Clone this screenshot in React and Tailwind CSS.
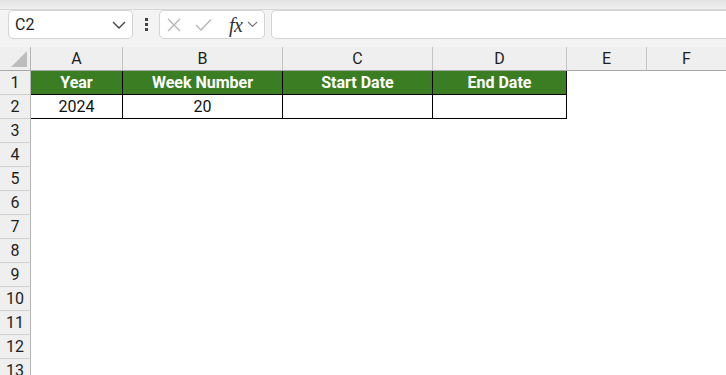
import { ChevronDown } from "lucide-react";

const cols = [
    { key: "A", w: "w-[92px]" },
    { key: "B", w: "w-[160px]" },
    { key: "C", w: "w-[150px]" },
    { key: "D", w: "w-[134px]" },
    { key: "E", w: "w-[80px]" },
    { key: "F", w: "w-[80px]" },
];

const header = ["Year", "Week Number", "Start Date", "End Date"];
const values = ["2024", "20", "", ""];

const RowHead = ({ n }) => (
    <div className="w-[31px] h-[24px] shrink-0 bg-[#efefef] border-r border-b border-r-[#b4b4b4] border-b-[#cfcfcf] flex items-center justify-center text-[16px] text-[#1e1e1e]">
        {n}
    </div>
);

export default function App() {
    const rows = Array.from({ length: 11 }, (_, i) => i + 3);

    return (
        <div className="w-[726px] h-[375px] overflow-hidden bg-[#f3f3f3] font-['Roboto',sans-serif] select-none">

            {/* ribbon edge */}
            <div className="h-[10px] bg-gradient-to-b from-[#e3e3e3] to-[#efefef] border-b border-[#d6d6d6]" />

            {/* formula bar */}
            <div className="flex items-stretch h-[29px] pl-[8px]">
                <div className="w-[125px] bg-white border border-[#d4d4d4] rounded-[5px] flex items-center justify-between pl-[6px] pr-[6px]">
                    <span className="text-[16px] text-[#1e1e1e]">C2</span>
                    <svg width="14" height="8" viewBox="0 0 14 8">
                        <path d="M1 1 L7 7 L13 1" stroke="#444" strokeWidth="1.4" fill="none" />
                    </svg>
                </div>
                <div className="w-[26px] flex flex-col items-center justify-center gap-[2px]">
                    <span className="w-[3px] h-[3px] bg-[#444]" />
                    <span className="w-[3px] h-[3px] bg-[#444]" />
                    <span className="w-[3px] h-[3px] bg-[#444]" />
                </div>
                <div className="w-[106px] bg-white border border-[#d4d4d4] rounded-[5px] flex items-center pl-[7px]">
                    <svg width="14" height="14" viewBox="0 0 14 14" className="shrink-0">
                        <path d="M1 1 L13 13 M13 1 L1 13" stroke="#b4b4b4" strokeWidth="1.3" fill="none" />
                    </svg>
                    <svg width="17" height="14" viewBox="0 0 17 14" className="ml-[14px] shrink-0">
                        <path d="M1 7 L6 12 L16 1.5" stroke="#b4b4b4" strokeWidth="1.3" fill="none" />
                    </svg>
                    <span className="ml-[17px] font-['Liberation_Serif',serif] italic text-[20px] leading-none text-[#333] tracking-[-0.5px]">fx</span>
                    <svg width="11" height="7" viewBox="0 0 11 7" className="ml-[5px]">
                        <path d="M1 1 L5.5 5.5 L10 1" stroke="#777" strokeWidth="1.2" fill="none" />
                    </svg>
                </div>
                <div className="flex-1 ml-[6px] bg-white border border-r-0 border-[#d4d4d4] rounded-l-[5px]" />
            </div>

            {/* gap */}
            <div className="h-[8px]" />

            {/* column headers */}
            <div className="flex h-[24px]">
                <div className="w-[31px] shrink-0 bg-[#efefef] border-r border-b border-r-[#b4b4b4] border-b-[#a9a9a9] flex items-end justify-end pr-[3px] pb-[3px]">
                    <svg width="16" height="16" viewBox="0 0 16 16">
                        <path d="M16 0 L16 16 L0 16 Z" fill="#bdbdbd" />
                    </svg>
                </div>
                {cols.map((c) => (
                    <div
                        key={c.key}
                        className={`${c.w} shrink-0 bg-[#efefef] border-r border-b border-r-[#c4c4c4] border-b-[#a9a9a9] flex items-center justify-center text-[16px] text-[#1e1e1e]`}
                    >
                        {c.key}
                    </div>
                ))}
            </div>

            {/* row 1 */}
            <div className="flex bg-white">
                <RowHead n={1} />
                {cols.map((c, i) =>
                    i < 4 ? (
                        <div
                            key={c.key}
                            className={`${c.w} h-[24px] shrink-0 bg-[#3a7d22] border-r border-b border-black flex items-center justify-center text-white font-bold text-[16px]`}
                        >
                            {header[i]}
                        </div>
                    ) : (
                        <div key={c.key} className={`${c.w} h-[24px] shrink-0`} />
                    )
                )}
            </div>

            {/* row 2 */}
            <div className="flex bg-white">
                <RowHead n={2} />
                {cols.map((c, i) =>
                    i < 4 ? (
                        <div
                            key={c.key}
                            className={`${c.w} h-[24px] shrink-0 border-r border-b border-black flex items-center justify-center text-[#111] text-[16px]`}
                        >
                            {values[i]}
                        </div>
                    ) : (
                        <div key={c.key} className={`${c.w} h-[24px] shrink-0`} />
                    )
                )}
            </div>

            {/* empty rows */}
            {rows.map((n) => (
                <div key={n} className="flex bg-white">
                    <RowHead n={n} />
                    <div className="flex-1 h-[24px]" />
                </div>
            ))}
        </div>
    );
}
